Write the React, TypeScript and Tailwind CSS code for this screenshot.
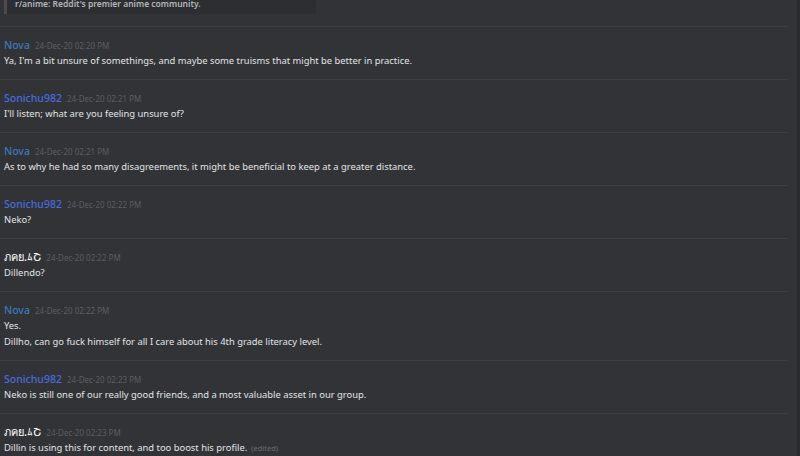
import React from 'react';

type Msg = {
  author: string;
  color: string;
  time: string;
  lines: string[];
  edited?: boolean;
};

const NOVA = 'text-[#3f78b8]';
const SONI = 'text-[#4a6bdc]';
const WHITE = 'text-white font-bold text-[11px]';

const messages: Msg[] = [
  { author: 'Nova', color: NOVA, time: '24-Dec-20 02:20 PM', lines: ["Ya, I'm a bit unsure of somethings, and maybe some truisms that might be better in practice."] },
  { author: 'Sonichu982', color: SONI, time: '24-Dec-20 02:21 PM', lines: ["I'll listen; what are you feeling unsure of?"] },
  { author: 'Nova', color: NOVA, time: '24-Dec-20 02:21 PM', lines: ['As to why he had so many disagreements, it might be beneficial to keep at a greater distance.'] },
  { author: 'Sonichu982', color: SONI, time: '24-Dec-20 02:22 PM', lines: ['Neko?'] },
  { author: 'ภคย.ﾑՇ', color: WHITE, time: '24-Dec-20 02:22 PM', lines: ['Dillendo?'] },
  { author: 'Nova', color: NOVA, time: '24-Dec-20 02:22 PM', lines: ['Yes.', 'Dillho, can go fuck himself for all I care about his 4th grade literacy level.'] },
  { author: 'Sonichu982', color: SONI, time: '24-Dec-20 02:23 PM', lines: ['Neko is still one of our really good friends, and a most valuable asset in our group.'] },
  { author: 'ภคย.ﾑՇ', color: WHITE, time: '24-Dec-20 02:23 PM', lines: ['Dillin is using this for content, and too boost his profile.'], edited: true },
];

const Message: React.FC<{ m: Msg }> = ({ m }) => (
  <div className="shrink-0 border-t border-[#3c3e43] pt-[10px] pb-[10px] pl-[4px]">
    <div className="flex items-baseline h-[16px] leading-[16px]">
      <span className={`text-[10.5px] font-medium ${m.color}`}>{m.author}</span>
      <span className="ml-[5px] text-[8px] text-[#5c5e64]">{m.time}</span>
    </div>
    {m.lines.map((l, i) => (
      <div key={i} className="text-[9.4px] leading-[16px] text-[#e3e4e5]">
        {l}
        {m.edited && i === m.lines.length - 1 && (
          <span className="ml-[4px] text-[7.5px] text-[#6b6d72]">(edited)</span>
        )}
      </div>
    ))}
  </div>
);

export default function App() {
  return (
    <div
      className="w-[800px] h-[456px] overflow-hidden bg-[#313337] flex"
      style={{ fontFamily: '"Noto Sans", "DejaVu Sans", sans-serif' }}
    >
      <div className="w-[788px] flex flex-col">
        {/* embed tail from previous message */}
        <div className="shrink-0 h-[26px] pl-[4px]">
          <div className="w-[312px] h-[14px] bg-[#2c2e32] border-l-[3px] border-[#4a4c51] rounded-br-[3px] flex items-end pl-[8px] pb-[5px]">
            <span className="text-[8.5px] font-semibold text-[#b4b6ba] leading-[10px]">
              r/anime: Reddit's premier anime community.
            </span>
          </div>
        </div>
        {messages.map((m, i) => (
          <Message key={i} m={m} />
        ))}
      </div>
      <div className="flex-1" />
      <div className="w-[3px] bg-[#2a2b2f]" />
    </div>
  );
}
